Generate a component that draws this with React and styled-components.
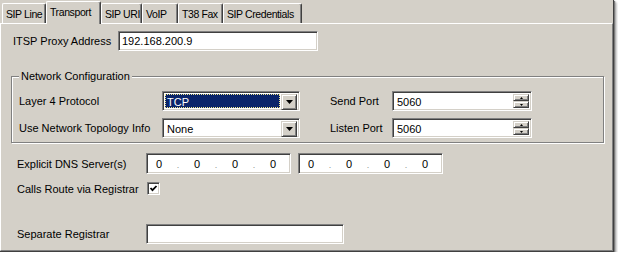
import React from 'react';
import styled, { createGlobalStyle, css } from 'styled-components';

const Global = createGlobalStyle`
    body {
        margin:0;
        background:#fff;
        font-family:"Liberation Sans", Arial, sans-serif;
        font-size:11px;
        color:#000;
    }
`

const sunken = css`
    box-sizing:border-box;
    background:#fff;
    border:1px solid;
    border-color:#808080 #fff #fff #808080;
    box-shadow:inset 1px 1px 0 #404040, inset -1px -1px 0 #d4d0c8;
`

const raised = css`
    box-sizing:border-box;
    background:#d4d0c8;
    border:1px solid;
    border-color:#d4d0c8 #404040 #404040 #d4d0c8;
    box-shadow:inset 1px 1px 0 #fff, inset -1px -1px 0 #808080;
`

const Frame = styled.div`
    box-sizing:border-box;
    width:614px;
    height:252px;
    display:flex;
    flex-direction:column;
    background:#d4d0c8;
    border-right:1px solid #404040;
    border-bottom:1px solid #404040;
    box-shadow:1px 1px 1px #7a7a7a, 2px 2px 2px #b0b0b0, 3px 3px 2px #dcdcdc;
`

const TabStrip = styled.div`
    height:23px;
    display:flex;
    align-items:flex-end;
    padding-left:2px;
`

const Tab = styled.div`
    box-sizing:border-box;
    width:${p => p.w}px;
    height:${p => p.active ? 23 : 20}px;
    margin-bottom:${p => p.active ? -1 : 0}px;
    position:relative;
    z-index:${p => p.active ? 2 : 0};
    padding:4px 0 0 3px;
    font-size:10.5px;
    letter-spacing:-0.4px;
    line-height:13px;
    white-space:nowrap;
    overflow:hidden;
    background:#d4d0c8;
    border-left:1px solid #fff;
    border-top:1px solid #fff;
    border-right:1px solid #404040;
    border-radius:2px 2px 0 0;
    box-shadow:inset -1px 0 0 #808080;
`

const Panel = styled.div`
    flex:1;
    box-sizing:border-box;
    border-top:1px solid #fff;
    border-left:1px solid #fff;
    border-right:1px solid #808080;
    border-bottom:1px solid #808080;
    padding:7px 0 0 10px;
`

const Row = styled.div`
    display:flex;
    align-items:center;
    height:${p => p.h || 20}px;
    margin-top:${p => p.top || 0}px;
    padding-left:${p => p.indent || 0}px;
`

const Label = styled.div`
    width:${p => p.w}px;
    margin-left:${p => p.gap || 0}px;
    flex:none;
    white-space:nowrap;
`

const TextField = styled.div`
    ${sunken};
    width:${p => p.w}px;
    height:20px;
    padding:0 3px;
    line-height:18px;
`

const Group = styled.div`
    position:relative;
    box-sizing:border-box;
    width:593px;
    height:67px;
    margin-top:25px;
    padding:14px 0 4px 7px;
    border:1px solid #808080;
    box-shadow:1px 1px 0 #fff, inset 1px 1px 0 #fff;
    display:flex;
    flex-direction:column;
    gap:7px;
`

const Legend = styled.span`
    position:absolute;
    top:-7px;
    left:7px;
    padding:0 2px;
    line-height:13px;
    background:#d4d0c8;
`

const Combo = styled.div`
    ${sunken};
    width:${p => p.w}px;
    height:20px;
    display:flex;
    padding:2px;
`

const ComboValue = styled.div`
    flex:1;
    box-sizing:border-box;
    line-height:14px;
    padding-left:1px;
    color:${p => p.focused ? '#fff' : '#000'};
    background:${p => p.focused ? '#0a246a' : 'transparent'};
    border:1px ${p => p.focused ? 'dotted #f0e68c' : 'solid transparent'};
    margin-right:1px;
`

const DropButton = styled.div`
    ${raised};
    width:16px;
    height:16px;
    display:flex;
    align-items:center;
    justify-content:center;
`

const SpinColumn = styled.div`
    display:flex;
    flex-direction:column;
    width:16px;
`

const SpinButton = styled.div`
    ${raised};
    height:8px;
    display:flex;
    align-items:center;
    justify-content:center;
`

const IpBox = styled.div`
    ${sunken};
    width:145px;
    height:21px;
    margin-right:${p => p.gap || 0}px;
    display:flex;
    align-items:center;
    padding-left:1px;
`

const Octet = styled.span`
    width:22px;
    text-align:center;
`

const Dot = styled.span`
    width:16px;
    text-align:center;
    color:#909090;
    font-size:9px;
    position:relative;
    top:1px;
`

const Check = styled.div`
    ${sunken};
    width:13px;
    height:13px;
    display:flex;
    align-items:center;
    justify-content:center;
`

const Arrow = ({ up, size = 7 }) => (
    <svg width={size} height={Math.ceil(size / 2)} viewBox={`0 0 ${size} ${Math.ceil(size / 2)}`}>
        <polygon
            points={up
                ? `0,${Math.ceil(size / 2)} ${size},${Math.ceil(size / 2)} ${size / 2},0`
                : `0,0 ${size},0 ${size / 2},${Math.ceil(size / 2)}`}
            fill="#000"
        />
    </svg>
)

const Dropdown = ({ value, focused }) => (
    <Combo w={138}>
        <ComboValue focused={focused}>{value}</ComboValue>
        <DropButton><Arrow /></DropButton>
    </Combo>
)

const Spin = ({ value }) => (
    <Combo w={140}>
        <ComboValue>{value}</ComboValue>
        <SpinColumn>
            <SpinButton><Arrow up size={3} /></SpinButton>
            <SpinButton><Arrow size={3} /></SpinButton>
        </SpinColumn>
    </Combo>
)

const IpAddress = ({ gap }) => (
    <IpBox gap={gap}>
        <Octet>0</Octet><Dot>.</Dot>
        <Octet>0</Octet><Dot>.</Dot>
        <Octet>0</Octet><Dot>.</Dot>
        <Octet>0</Octet>
    </IpBox>
)

const tabs = [
    ['SIP Line', 44],
    ['Transport', 55],
    ['SIP URI', 41],
    ['VoIP', 36],
    ['T38 Fax', 45],
    ['SIP Credentials', 79],
]

const App = () => {
    return (
        <>
            <Global />
            <Frame>
                <TabStrip>
                    {tabs.map(([name, w]) => (
                        <Tab key={name} w={w} active={name === 'Transport'}>{name}</Tab>
                    ))}
                </TabStrip>
                <Panel>
                    <Row indent={2}>
                        <Label w={105}>ITSP Proxy Address</Label>
                        <TextField w={200}>192.168.200.9</TextField>
                    </Row>

                    <Group>
                        <Legend>Network Configuration</Legend>
                        <Row>
                            <Label w={143}>Layer 4 Protocol</Label>
                            <Dropdown value="TCP" focused />
                            <Label w={62} gap={30}>Send Port</Label>
                            <Spin value="5060" />
                        </Row>
                        <Row>
                            <Label w={143}>Use Network Topology Info</Label>
                            <Dropdown value="None" />
                            <Label w={62} gap={30}>Listen Port</Label>
                            <Spin value="5060" />
                        </Row>
                    </Group>

                    <Row indent={6} top={10} h={21}>
                        <Label w={129}>Explicit DNS Server(s)</Label>
                        <IpAddress gap={7} />
                        <IpAddress />
                    </Row>
                    <Row indent={6} top={8} h={13}>
                        <Label w={130}>Calls Route via Registrar</Label>
                        <Check>
                            <svg width="9" height="9" viewBox="0 0 9 9">
                                <polyline points="1.5,4 3.5,6.2 7.5,2" fill="none" stroke="#000" strokeWidth="1.8" />
                            </svg>
                        </Check>
                    </Row>
                    <Row indent={6} top={29}>
                        <Label w={129}>Separate Registrar</Label>
                        <TextField w={198} />
                    </Row>
                </Panel>
            </Frame>
        </>
    )
}

export default App
